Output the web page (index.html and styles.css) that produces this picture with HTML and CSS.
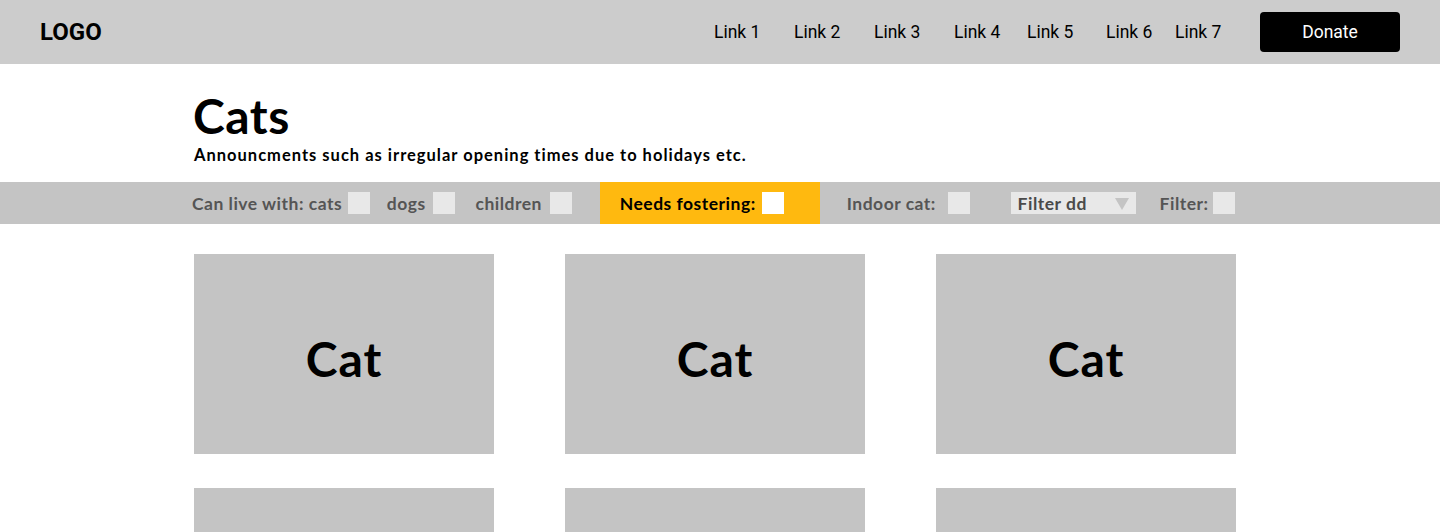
FILE: index.html
```html
<!DOCTYPE html>
<html lang="en">
<head>
<meta charset="utf-8">
<title>Cats</title>
<link rel="stylesheet" href="styles.css">
</head>
<body>
<header class="topbar">
  <div class="logo">LOGO</div>
  <nav class="nav">
    <a href="#">Link 1</a>
    <a href="#">Link 2</a>
    <a href="#">Link 3</a>
    <a href="#">Link 4</a>
    <a href="#">Link 5</a>
    <a href="#">Link 6</a>
    <a href="#">Link 7</a>
  </nav>
  <button class="donate">Donate</button>
</header>

<section class="intro">
  <h1>Cats</h1>
  <p>Announcments such as irregular opening times due to holidays etc.</p>
</section>

<div class="filters">
  <div class="filters-inner">
    <label class="f f-cats">Can live with: cats <span class="box"></span></label>
    <label class="f f-dogs">dogs <span class="box"></span></label>
    <label class="f f-children">children <span class="box"></span></label>
    <label class="f f-foster">Needs fostering: <span class="box white"></span></label>
    <label class="f f-indoor">Indoor cat: <span class="box"></span></label>
    <div class="select">Filter dd <span class="tri"></span></div>
    <label class="f f-filter">Filter: <span class="box"></span></label>
  </div>
</div>

<main class="grid">
  <div class="card">Cat</div>
  <div class="card">Cat</div>
  <div class="card">Cat</div>
  <div class="card"></div>
  <div class="card"></div>
  <div class="card"></div>
</main>
</body>
</html>
```

FILE: styles.css
```css
* { box-sizing: border-box; }
body {
  margin: 0;
  font-family: "Lato", "Open Sans", sans-serif;
  color: #000;
  background: #fff;
}
.topbar {
  height: 64px;
  background: #cccccc;
  display: flex;
  align-items: center;
  padding: 0 40px;
}
.logo {
  font-family: "Roboto", sans-serif;
  font-weight: 700;
  font-size: 24px;
  flex: 1;
}
.nav {
  display: flex;
  align-items: center;
  font-family: "Roboto", sans-serif;
  font-size: 17.5px;
}
.nav a {
  color: #000;
  text-decoration: none;
  width: 80px;
  white-space: nowrap;
}
.nav a:nth-child(4) { width: 73px; }
.nav a:nth-child(5) { width: 79px; }
.nav a:nth-child(6) { width: 69px; }
.nav a:nth-child(7) { width: 85px; }
.donate {
  width: 140px;
  height: 40px;
  background: #000;
  color: #fff;
  border: 0;
  border-radius: 4px;
  font-family: "Roboto", sans-serif;
  font-size: 17.5px;
}
.intro {
  padding: 26px 0 0 193px;
  height: 118px;
}
.intro h1 {
  margin: 0;
  font-size: 48px;
  font-weight: 700;
  line-height: 52px;
  letter-spacing: 0.5px;
}
.intro p {
  margin: 3px 0 0 1px;
  font-size: 16.5px;
  font-weight: 700;
  line-height: 20px;
  letter-spacing: 1px;
}
.filters {
  background: #c4c4c4;
  height: 42px;
}
.filters-inner {
  display: flex;
  align-items: center;
  height: 42px;
  padding-left: 192px;
  font-weight: 700;
  font-size: 17.5px;
  letter-spacing: 0.5px;
  color: #555;
}
.f {
  display: flex;
  align-items: center;
  height: 42px;
  white-space: pre;
}
.box {
  display: inline-block;
  width: 22px;
  height: 22px;
  background: #e8e8e8;
  margin-left: 1px;
}
.box.white { background: #fff; margin-left: 2px; }
.f-dogs { margin-left: 17px; }
.f-dogs .box { margin-left: 3px; }
.f-children { margin-left: 20px; }
.f-children .box { margin-left: 3px; }
.f-foster {
  margin-left: 28px;
  background: #ffb90f;
  color: #000;
  width: 220px;
  padding-left: 20px;
}
.f-indoor { margin-left: 27px; }
.f-indoor .box { margin-left: 7px; }
.select {
  margin-left: 41px;
  width: 125px;
  height: 22px;
  background: #e8e8e8;
  display: flex;
  align-items: center;
  padding-left: 7px;
  position: relative;
  color: #4a4a4a;
}
.tri {
  position: absolute;
  left: 104px;
  top: 6px;
  width: 0;
  height: 0;
  border-left: 7.5px solid transparent;
  border-right: 7.5px solid transparent;
  border-top: 12px solid #c4c4c4;
}
.f-filter { margin-left: 24px; }
.f-filter .box { margin-left: 0; }
.grid {
  display: grid;
  grid-template-columns: repeat(3, 300px);
  column-gap: 71px;
  row-gap: 34px;
  padding: 30px 0 0 194px;
}
.card {
  height: 200px;
  background: #c4c4c4;
  display: flex;
  align-items: center;
  justify-content: center;
  padding-top: 8px;
  font-size: 48px;
  font-weight: 700;
  letter-spacing: 1px;
}
```
